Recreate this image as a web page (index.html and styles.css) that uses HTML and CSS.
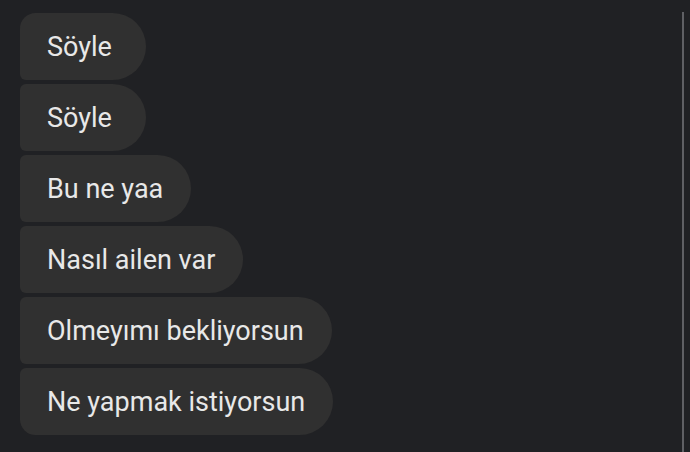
FILE: index.html
```html
<!DOCTYPE html>
<html lang="tr">
<head>
    <meta charset="UTF-8">
    <title>Mesajlar</title>
    <link rel="stylesheet" href="styles.css">
</head>
<body>
    <div class="chat">
        <div class="messages">
            <div class="bubble first">Söyle</div>
            <div class="bubble">Söyle</div>
            <div class="bubble">Bu ne yaa</div>
            <div class="bubble">Nasıl ailen var</div>
            <div class="bubble">Olmeyımı bekliyorsun</div>
            <div class="bubble last">Ne yapmak istiyorsun</div>
        </div>
        <div class="scrollbar"></div>
    </div>
</body>
</html>
```

FILE: styles.css
```css
body {
    margin: 0;
    background-color: #202124;
    font-family: Roboto, "Noto Sans", sans-serif;
    overflow: hidden;
}

.chat {
    display: flex;
    height: 452px;
}

.messages {
    flex: 1;
    display: flex;
    flex-direction: column;
    align-items: flex-start;
    gap: 4px;
    padding: 13px 0 0 20px;
}

.bubble {
    box-sizing: border-box;
    min-width: 126px;
    height: 67px;
    display: flex;
    align-items: center;
    padding: 0 28px 0 27px;
    background-color: #303030;
    color: #e8e8e8;
    font-size: 27px;
    border-radius: 6px 34px 34px 6px;
}

.bubble.first {
    border-top-left-radius: 16px;
}

.bubble.last {
    border-bottom-left-radius: 16px;
}

/* thin scroll line on the right edge */
.scrollbar {
    width: 2px;
    margin: 12px 6px 0 0;
    background-color: #5f6064;
}
```
